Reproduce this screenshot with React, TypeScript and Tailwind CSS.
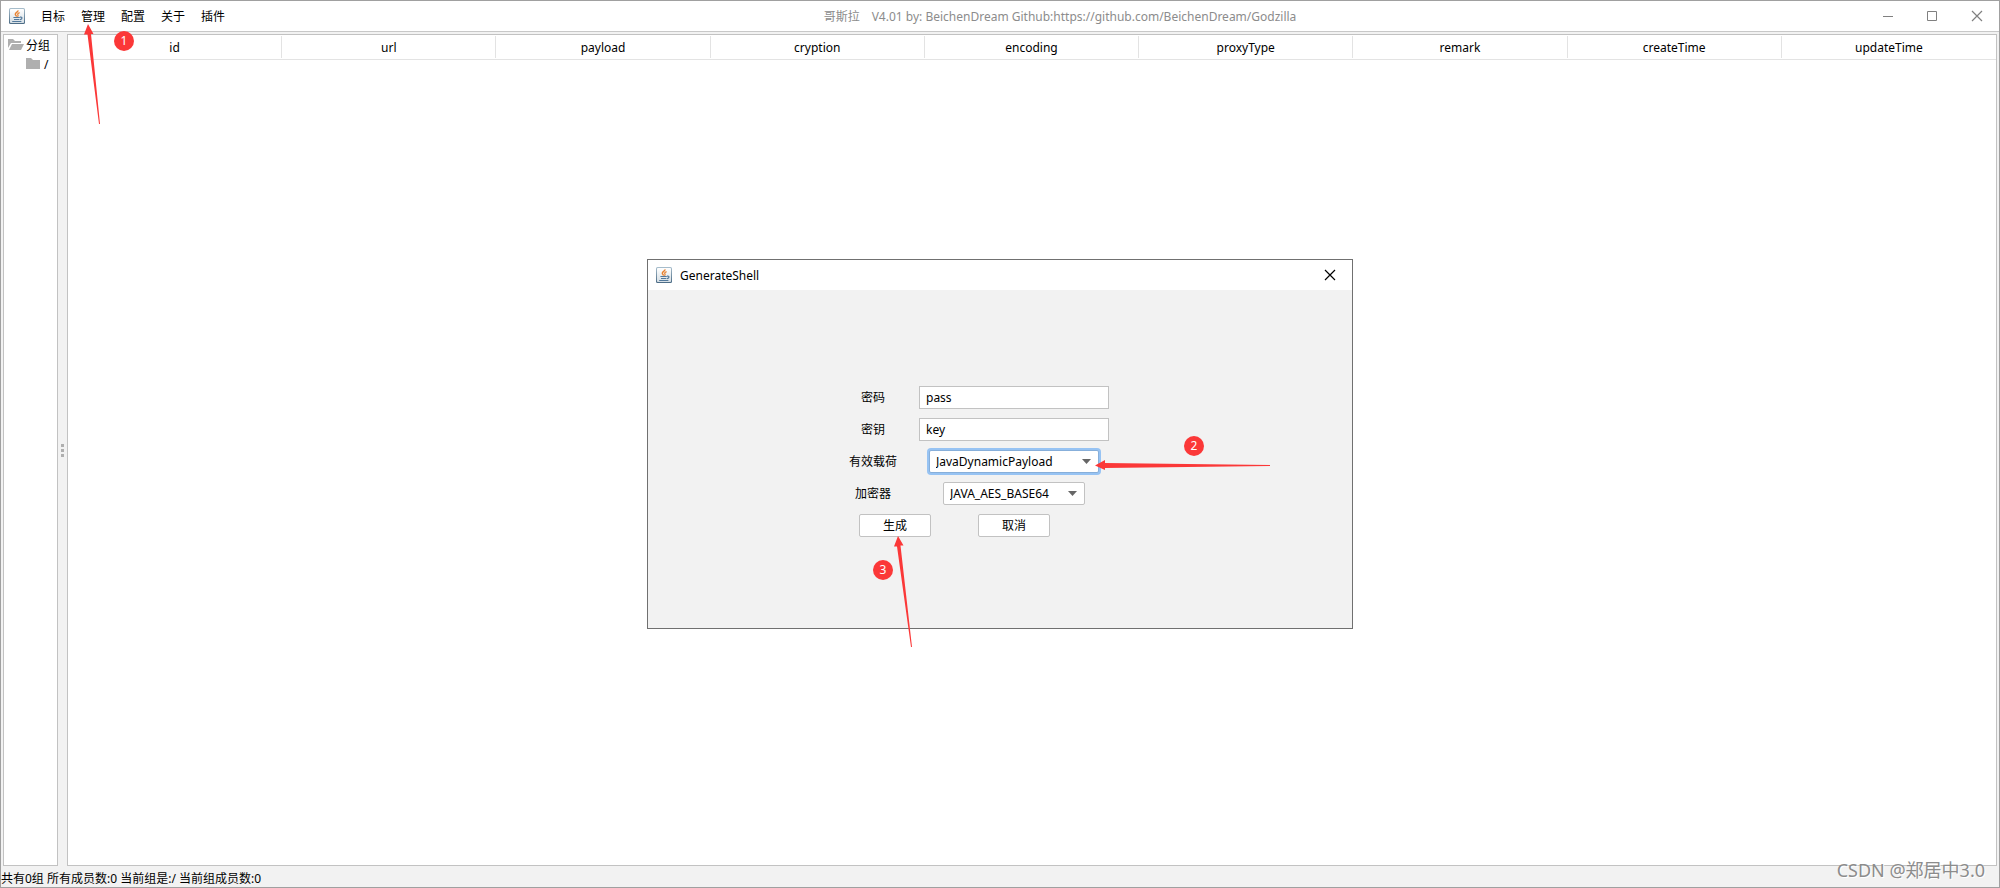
import { useState } from 'react';

const menus = ['目标', '管理', '配置', '关于', '插件'];

const columns = [
  'id',
  'url',
  'payload',
  'cryption',
  'encoding',
  'proxyType',
  'remark',
  'createTime',
  'updateTime',
];

const payloads = ['JavaDynamicPayload', 'CShapDynamicPayload', 'PhpDynamicPayload', 'AspDynamicPayload'];
const cryptions = ['JAVA_AES_BASE64', 'JAVA_AES_RAW'];

function JavaIcon() {
  return (
    <svg width="16" height="16" viewBox="0 0 16 16" aria-hidden="true" className="shrink-0">
      <defs>
        <linearGradient id="java-frame" x1="0" y1="0" x2="0" y2="1">
          <stop offset="0" stopColor="#a9bfcd" />
          <stop offset="1" stopColor="#4a6a84" />
        </linearGradient>
        <linearGradient id="java-face" x1="0" y1="0" x2="0" y2="1">
          <stop offset="0" stopColor="#ffffff" />
          <stop offset="1" stopColor="#d5dee4" />
        </linearGradient>
      </defs>
      <rect width="16" height="16" rx="1.5" fill="url(#java-frame)" />
      <rect x="1" y="1" width="14" height="14" rx="0.8" fill="url(#java-face)" />
      <path d="M9 2.3C9.4 4 6 4.6 6.3 6.3C6.5 7.2 7.4 7.7 7.5 8.6" fill="none" stroke="#e8812f" strokeWidth="1.4" />
      <path d="M10.6 4.6C8.6 5.4 8.3 6.1 9 7C9.4 7.7 9 8.3 8.4 8.8" fill="none" stroke="#e8812f" strokeWidth="1.2" />
      <path
        d="M4.4 9.5H10.8M5 11.5H10.4M3.2 13.5H12.4M11 9.2C13.6 8.6 13.6 11.2 11 11.6"
        fill="none"
        stroke="#52789b"
        strokeWidth="1.2"
      />
    </svg>
  );
}

function SelectBox({
  id,
  options,
  className,
}: {
  id: string;
  options: string[];
  className: string;
}) {
  const [value, setValue] = useState(options[0]);

  return (
    <div className="relative">
      <select
        id={id}
        value={value}
        onChange={(e) => setValue(e.target.value)}
        className={`block h-[23px] appearance-none rounded-xs border bg-white pl-1.5 pt-px leading-4 outline-none ${className}`}
      >
        {options.map((o) => (
          <option key={o}>{o}</option>
        ))}
      </select>
      <svg
        width="9"
        height="5"
        viewBox="0 0 9 5"
        aria-hidden="true"
        className="pointer-events-none absolute right-2 top-[9px]"
      >
        <path d="M0 0H9L4.5 5Z" fill="#666" />
      </svg>
    </div>
  );
}

function Badge({ n, className }: { n: number; className: string }) {
  return (
    <span
      className={`absolute flex size-5 items-center justify-center rounded-full bg-[#fb3838] text-white ${className}`}
    >
      {n}
    </span>
  );
}

function GenerateShell() {
  const [pass, setPass] = useState('pass');
  const [key, setKey] = useState('key');

  return (
    <div
      role="dialog"
      aria-label="GenerateShell"
      className="relative flex h-[370px] w-[706px] flex-col border border-[#707070] bg-[#f2f2f2]"
    >
      <div className="flex h-[30px] items-center bg-white pl-2 pr-4">
        <JavaIcon />
        <h2 className="ml-2 pt-0.5">GenerateShell</h2>
        <button type="button" aria-label="close" className="ml-auto">
          <svg width="12" height="12" viewBox="0 0 12 12" className="block">
            <path d="M1 1L11 11M11 1L1 11" stroke="#000" strokeWidth="1.2" />
          </svg>
        </button>
      </div>

      <form
        onSubmit={(e) => e.preventDefault()}
        className="flex grow items-center justify-center pr-[42px] pt-1"
      >
        <div className="flex flex-col gap-[9px]">
          <div className="flex items-center gap-[22px]">
            <label htmlFor="pass" className="w-12 pt-0.5 text-center">密码</label>
            <input
              id="pass"
              value={pass}
              onChange={(e) => setPass(e.target.value)}
              className="h-[23px] w-[190px] border border-[#c2c2c2] bg-white px-1.5 outline-none"
            />
          </div>
          <div className="flex items-center gap-[22px]">
            <label htmlFor="key" className="w-12 pt-0.5 text-center">密钥</label>
            <input
              id="key"
              value={key}
              onChange={(e) => setKey(e.target.value)}
              className="h-[23px] w-[190px] border border-[#c2c2c2] bg-white px-1.5 outline-none"
            />
          </div>
          <div className="flex items-center gap-[22px]">
            <label htmlFor="payload" className="w-12 pt-0.5 text-center">有效载荷</label>
            <div className="flex w-[190px] justify-center">
              <SelectBox
                id="payload"
                options={payloads}
                className="w-[170px] border-[#87afda] ring-2 ring-[#97c3f3]"
              />
            </div>
          </div>
          <div className="flex items-center gap-[22px]">
            <label htmlFor="cryption" className="w-12 pt-0.5 text-center">加密器</label>
            <div className="flex w-[190px] justify-center">
              <SelectBox id="cryption" options={cryptions} className="w-[142px] border-[#c2c2c2]" />
            </div>
          </div>
          <div className="flex gap-[47px] pl-2.5">
            <button type="submit" className="h-[23px] w-[72px] rounded-xs border border-[#c2c2c2] bg-white pt-0.5">
              生成
            </button>
            <button type="button" className="h-[23px] w-[72px] rounded-xs border border-[#c2c2c2] bg-white pt-0.5">
              取消
            </button>
          </div>
        </div>
      </form>

      {/* pasos 2 y 3 */}
      <Badge n={2} className="left-[536px] top-[176px]" />
      <svg width="175" height="12" viewBox="0 0 175 12" className="absolute left-[447px] top-[199px]">
        <path d="M0 6.5L10 1V4L175 6V7L10 9V11Z" fill="#fb3838" />
      </svg>
      <Badge n={3} className="left-[225px] top-[300px]" />
      <svg width="24" height="112" viewBox="0 0 24 112" className="absolute left-[244px] top-[276px]">
        <path d="M6 0L11.5 9.5H8.5L20 111H19L5 10.5H2Z" fill="#fb3838" />
      </svg>
    </div>
  );
}

export default function App() {
  return (
    <div className="relative flex min-h-screen flex-col border border-[#a0a0a0] bg-[#f2f2f2] font-['Noto_Sans','Noto_Sans_CJK_SC',sans-serif] text-xs leading-4 text-black">
      <header className="flex h-[31px] items-center border-b border-[#c8c8c8] bg-white pl-2 pr-4">
        <div className="flex flex-1 items-center">
          <JavaIcon />
          <nav className="ml-4 flex gap-4 pt-0.5">
            {menus.map((m) => (
              <button key={m} type="button">
                {m}
              </button>
            ))}
          </nav>
        </div>
        <h1 className="flex gap-3 whitespace-nowrap pl-32 pt-0.5 text-[#8c8c8c]">
          <span>哥斯拉</span>
          <span>V4.01 by: BeichenDream Github:https://github.com/BeichenDream/Godzilla</span>
        </h1>
        <div className="flex flex-1 items-center justify-end gap-[33px] text-[#808080]">
          <button type="button" aria-label="minimize">
            <svg width="11" height="11" viewBox="0 0 11 11" className="block">
              <path d="M0 5.5H10" stroke="currentColor" />
            </svg>
          </button>
          <button type="button" aria-label="maximize">
            <svg width="11" height="11" viewBox="0 0 11 11" className="block">
              <path d="M0.5 0.5H9.5V9.5H0.5Z" fill="none" stroke="currentColor" />
            </svg>
          </button>
          <button type="button" aria-label="close">
            <svg width="12" height="12" viewBox="0 0 12 12" className="block">
              <path d="M1 1L11 11M11 1L1 11" stroke="currentColor" strokeWidth="1.2" />
            </svg>
          </button>
        </div>
      </header>

      <main className="flex grow px-0.5 pt-0.5">
        <aside className="w-[55px] shrink-0 border border-[#c2c2c2] bg-white pl-1">
          <div className="flex h-[19px] items-center gap-0.5 whitespace-nowrap">
            <svg width="16" height="13" viewBox="0 0 16 13" aria-hidden="true" className="shrink-0">
              <path d="M0 10V1H5L7 3H13V5H3Z" fill="#afafaf" />
              <path d="M4 6H16L13 12H1Z" fill="#afafaf" />
            </svg>
            <span className="pt-0.5">分组</span>
          </div>
          <div className="flex h-[19px] items-center gap-1 pl-[18px]">
            <svg width="14" height="11" viewBox="0 0 14 11" aria-hidden="true" className="shrink-0">
              <path d="M0 0H5L7 2H14V11H0Z" fill="#afafaf" />
            </svg>
            <span className="pt-0.5">/</span>
          </div>
        </aside>

        <div className="flex w-[9px] shrink-0 flex-col items-center justify-center gap-0.5">
          <span className="size-[3px] bg-[#afafaf]" />
          <span className="size-[3px] bg-[#afafaf]" />
          <span className="size-[3px] bg-[#afafaf]" />
        </div>

        <div className="grow border border-[#c2c2c2] bg-white">
          <table className="w-full table-fixed">
            <thead>
              <tr className="border-b border-[#e3e3e3]">
                {columns.map((c) => (
                  <th key={c} className="group p-0 font-normal">
                    <div className="my-px h-[22px] border-r border-[#e3e3e3] pt-1 group-last:border-r-0">{c}</div>
                  </th>
                ))}
              </tr>
            </thead>
          </table>
        </div>
      </main>

      <footer className="h-[21px] pt-[5px]">共有0组 所有成员数:0 当前组是:/ 当前组成员数:0</footer>

      {/* paso 1 */}
      <Badge n={1} className="left-[113px] top-[30px]" />
      <svg width="20" height="102" viewBox="0 0 20 102" className="absolute left-[82px] top-[23px]">
        <path d="M5 0L10.5 10H8L17 100H16L4.5 10.5H1Z" fill="#fb3838" />
      </svg>

      <div className="absolute inset-0 flex items-center justify-center">
        <GenerateShell />
      </div>

      <span className="absolute bottom-[7px] right-3.5 text-lg leading-5 text-[#8c8c8c] [text-shadow:1px_1px_0_#fff]">
        CSDN @郑居中3.0
      </span>
    </div>
  );
}
